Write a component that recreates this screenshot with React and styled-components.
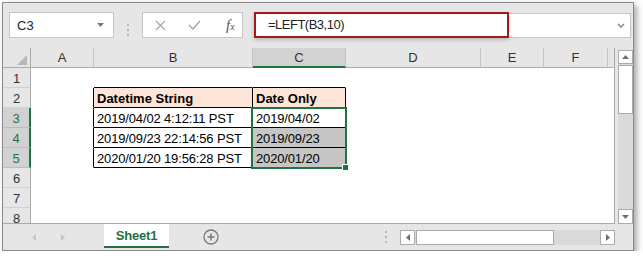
import React from 'react';
import styled, { createGlobalStyle } from 'styled-components';

const GREEN = '#217346';

const GlobalStyle = createGlobalStyle`
    body {
        margin: 0;
        background: #fff;
        font-family: "Liberation Sans", Arial, sans-serif;
    }
    * { box-sizing: border-box; }
`;

const columns = ['A', 'B', 'C', 'D', 'E', 'F', ''];

// 표 데이터 (B, C 열)
const rows = [
    { n: 1 },
    { n: 2, b: 'Datetime String', c: 'Date Only', head: true },
    { n: 3, b: '2019/04/02 4:12:11 PST', c: '2019/04/02', sel: true },
    { n: 4, b: '2019/09/23 22:14:56 PST', c: '2019/09/23', sel: true, shade: true },
    { n: 5, b: '2020/01/20 19:56:28 PST', c: '2020/01/20', sel: true, shade: true },
    { n: 6 },
    { n: 7 },
    { n: 8 },
];

const Arrow = ({ dir = 'down', color = '#6f6f6f' }) => {
    const d = {
        down: 'M0 0h7L3.5 4z',
        up: 'M0 4h7L3.5 0z',
        left: 'M4 0v7L0 3.5z',
        right: 'M0 0v7L4 3.5z',
    }[dir];
    const vert = dir === 'up' || dir === 'down';
    return (
        <svg width={vert ? 7 : 4} height={vert ? 4 : 7} viewBox={vert ? '0 0 7 4' : '0 0 4 7'}>
            <path d={d} fill={color} />
        </svg>
    );
};

const App = () => {
    const renderRow = (r) => {
        const tableRow = r.n >= 2 && r.n <= 5;
        return (
            <React.Fragment key={r.n}>
                <RowHead $sel={r.sel}>{r.n}</RowHead>
                <Cell $r={tableRow ? '#000' : null} />
                <Cell
                    $r={tableRow ? '#000' : null}
                    $b={r.n >= 1 && r.n <= 5 ? '#000' : null}
                    $bg={r.head ? '#fce4d6' : null}
                    $bold={r.head}
                >
                    {r.b}
                </Cell>
                <Cell
                    $r={tableRow ? '#000' : null}
                    $b={r.n >= 1 && r.n <= 5 ? '#000' : null}
                    $bg={r.head ? '#fce4d6' : r.shade ? '#c6c6c6' : null}
                    $bold={r.head}
                >
                    {r.c}
                </Cell>
                <Cell />
                <Cell />
                <Cell />
                <Cell />
            </React.Fragment>
        );
    };

    return (
        <>
            <GlobalStyle />
            <Page>
                <Window>
                    <FormulaBar>
                        <NameBox>
                            <span>C3</span>
                            <Arrow dir="down" color="#7a7a7a" />
                        </NameBox>
                        <Grip $h>
                            <i /><i /><i />
                        </Grip>
                        <FuncBox>
                            <svg width="11" height="11" viewBox="0 0 11 11">
                                <path d="M1 1l9 9M10 1l-9 9" stroke="#a8a8a8" strokeWidth="1.3" />
                            </svg>
                            <svg width="13" height="10" viewBox="0 0 13 10">
                                <path d="M1 5l4 4 7-8" stroke="#a8a8a8" strokeWidth="1.4" fill="none" />
                            </svg>
                            <Fx>
                                f<small>x</small>
                            </Fx>
                        </FuncBox>
                        <FormulaInput>
                            <FormulaText>=LEFT(B3,10)</FormulaText>
                            <Expand>
                                <svg width="8" height="5" viewBox="0 0 8 5">
                                    <path d="M1 1l3 3 3-3" stroke="#8a8a8a" strokeWidth="1.5" fill="none" />
                                </svg>
                            </Expand>
                        </FormulaInput>
                    </FormulaBar>

                    <SheetArea>
                        <Grid>
                            <Corner>
                                <svg width="10" height="10" viewBox="0 0 10 10">
                                    <path d="M10 0V10H0z" fill="#b8b8b8" />
                                </svg>
                            </Corner>
                            {columns.map((c) => (
                                <ColHead key={c || 'rest'} $sel={c === 'C'} $last={!c}>
                                    {c}
                                </ColHead>
                            ))}
                            {rows.map(renderRow)}
                            <Selection />
                            <FillHandle />
                        </Grid>
                        <VScroll>
                            <Track $v>
                                <ScrollBtn $h={14}>
                                    <Arrow dir="up" />
                                </ScrollBtn>
                                <Thumb $v />
                                <ScrollBtn $h={15}>
                                    <Arrow dir="down" />
                                </ScrollBtn>
                            </Track>
                        </VScroll>
                    </SheetArea>

                    <TabBar>
                        <TabNav>
                            <Arrow dir="left" color="#c4c4c4" />
                            <Arrow dir="right" color="#c4c4c4" />
                        </TabNav>
                        <SheetTab>Sheet1</SheetTab>
                        <AddSheet>
                            <svg width="16" height="16" viewBox="0 0 16 16">
                                <circle cx="8" cy="8" r="7" stroke="#7a7a7a" strokeWidth="1.3" fill="none" />
                                <path d="M8 4.5v7M4.5 8h7" stroke="#7a7a7a" strokeWidth="1.5" />
                            </svg>
                        </AddSheet>
                        <Spacer />
                        <Grip>
                            <i /><i /><i />
                        </Grip>
                        <HScroll>
                            <ScrollBtn $w={15}>
                                <Arrow dir="left" />
                            </ScrollBtn>
                            <Thumb />
                            <Spacer />
                            <ScrollBtn $w={15}>
                                <Arrow dir="right" />
                            </ScrollBtn>
                        </HScroll>
                    </TabBar>
                </Window>
            </Page>
        </>
    );
};

export default App;

/* 스타일 정의 */
const Page = styled.div`
    padding: 2px 0 0 2px;
`;

const Window = styled.div`
    width: 632px;
    height: 249px;
    border: 1px solid #8a8a8a;
    background: #e6e6e6;
    display: flex;
    flex-direction: column;
    box-shadow: 3px 3px 6px rgba(0, 0, 0, 0.35);
`;

const FormulaBar = styled.div`
    height: 45px;
    display: flex;
    align-items: flex-start;
    padding: 9px 2px 0 6px;
`;

const NameBox = styled.div`
    width: 105px;
    height: 26px;
    background: #fff;
    border: 1px solid #c6c6c6;
    display: flex;
    align-items: center;
    justify-content: space-between;
    padding: 0 9px 0 7px;
    font-size: 13px;
    color: #222;
`;

const Grip = styled.div`
    width: ${(p) => (p.$h ? '28px' : '3px')};
    margin-right: ${(p) => (p.$h ? '0' : '13px')};
    height: ${(p) => (p.$h ? '26px' : 'auto')};
    align-self: center;
    display: flex;
    flex-direction: column;
    align-items: center;
    justify-content: center;
    gap: 3px;

    i {
        width: 2px;
        height: 2px;
        background: #b4b4b4;
    }
`;

const FuncBox = styled.div`
    width: 101px;
    height: 26px;
    background: #fff;
    border: 1px solid #c6c6c6;
    display: flex;
    align-items: center;
    padding-left: 12px;
    gap: 22px;
`;

const Fx = styled.span`
    font-family: "Liberation Serif", serif;
    font-style: italic;
    font-size: 15px;
    color: #555;
    margin-left: 3px;

    small {
        font-size: 10px;
    }
`;

const FormulaInput = styled.div`
    flex: 1;
    height: 25px;
    margin: 1px 0 0 11px;
    background: #fff;
    border: 1px solid #c6c6c6;
    display: flex;
`;

const FormulaText = styled.div`
    width: 255px;
    margin: -2px 0 -1px -1px;
    border: 2px solid #a31818;
    padding: 0 0 0 12px;
    font-size: 13px;
    letter-spacing: -0.5px;
    line-height: 22px;
    color: #222;
    box-shadow: 0 2px 4px rgba(0, 0, 0, 0.2);
`;

const Expand = styled.div`
    flex: 1;
    display: flex;
    justify-content: flex-end;
    align-items: center;
    padding-right: 5px;
`;

const SheetArea = styled.div`
    height: 176px;
    display: flex;
`;

const Grid = styled.div`
    position: relative;
    width: 612px;
    height: 176px;
    display: grid;
    grid-template-columns: 28px 63px 159px 93px 135px 63px 64px 1fr;
    grid-auto-rows: 20px;
    overflow: hidden;
    background: #fff;
    border-right: 1px solid #ababab;
    border-bottom: 1px solid #ababab;
`;

const Corner = styled.div`
    background: #e6e6e6;
    border-right: 1px solid #ababab;
    border-bottom: 1px solid #ababab;
    display: flex;
    align-items: flex-end;
    justify-content: flex-end;
    padding: 0 3px 2px 0;
`;

const ColHead = styled.div`
    background: ${(p) => (p.$sel ? '#d2d2d2' : '#e6e6e6')};
    border-right: 1px solid ${(p) => (p.$last ? 'transparent' : '#c6c6c6')};
    border-bottom: ${(p) => (p.$sel ? `2px solid ${GREEN}` : '1px solid #ababab')};
    text-align: center;
    font-size: 13px;
    line-height: 19px;
    color: #333;
`;

const RowHead = styled.div`
    background: ${(p) => (p.$sel ? '#d2d2d2' : '#e6e6e6')};
    border-right: ${(p) => (p.$sel ? `2px solid ${GREEN}` : '1px solid #ababab')};
    border-bottom: 1px solid ${(p) => (p.$sel ? '#bdbdbd' : '#d0d0d0')};
    text-align: center;
    font-size: 13px;
    line-height: 17px;
    padding-top: 2px;
    color: ${(p) => (p.$sel ? GREEN : '#333')};
`;

const Cell = styled.div`
    background: ${(p) => p.$bg || '#fff'};
    border-right: 1px solid ${(p) => p.$r || 'transparent'};
    border-bottom: 1px solid ${(p) => p.$b || 'transparent'};
    font-size: 13px;
    font-weight: ${(p) => (p.$bold ? 700 : 400)};
    letter-spacing: ${(p) => (p.$bold ? '0' : '-0.15px')};
    line-height: 17px;
    padding: 2px 0 0 3px;
    color: #000;
    white-space: nowrap;
    overflow: hidden;
`;

const Selection = styled.div`
    position: absolute;
    left: 248px;
    top: 59px;
    width: 96px;
    height: 62px;
    border: 2px solid ${GREEN};
`;

const FillHandle = styled.div`
    position: absolute;
    left: 339px;
    top: 116px;
    width: 7px;
    height: 7px;
    background: ${GREEN};
    border: 1px solid #fff;
`;

const VScroll = styled.div`
    flex: 1;
    padding: 2px 0 0 3px;
    display: flex;
`;

const Track = styled.div`
    flex: 1;
    background: #dadada;
    display: flex;
    flex-direction: ${(p) => (p.$v ? 'column' : 'row')};
    justify-content: space-between;
    position: relative;
`;

const ScrollBtn = styled.div`
    width: ${(p) => (p.$w ? `${p.$w}px` : 'auto')};
    height: ${(p) => (p.$h ? `${p.$h}px` : 'auto')};
    background: #fff;
    border: 1px solid #ababab;
    display: flex;
    align-items: center;
    justify-content: center;
    flex-shrink: 0;
`;

const Thumb = styled.div`
    background: #fff;
    border: 1px solid #ababab;
    ${(p) =>
        p.$v
            ? 'position: absolute; left: 0; right: 0; top: 15px; height: 49px;'
            : 'width: 138px; margin-left: 1px;'}
`;

const TabBar = styled.div`
    flex: 1;
    display: flex;
    align-items: flex-start;
    padding-right: 18px;
`;

const TabNav = styled.div`
    width: 101px;
    height: 26px;
    display: flex;
    align-items: center;
    padding-left: 29px;
    gap: 25px;
`;

const SheetTab = styled.div`
    width: 65px;
    height: 24px;
    background: #fff;
    border-bottom: 2px solid ${GREEN};
    color: ${GREEN};
    font-weight: 700;
    font-size: 13px;
    letter-spacing: -0.2px;
    text-align: center;
    line-height: 20px;
    padding-top: 2px;
`;

const AddSheet = styled.div`
    margin-left: 34px;
    height: 26px;
    display: flex;
    align-items: center;
`;

const Spacer = styled.div`
    flex: 1;
`;

const HScroll = styled.div`
    width: 215px;
    height: 15px;
    margin-top: 6px;
    background: #dadada;
    display: flex;
`;
